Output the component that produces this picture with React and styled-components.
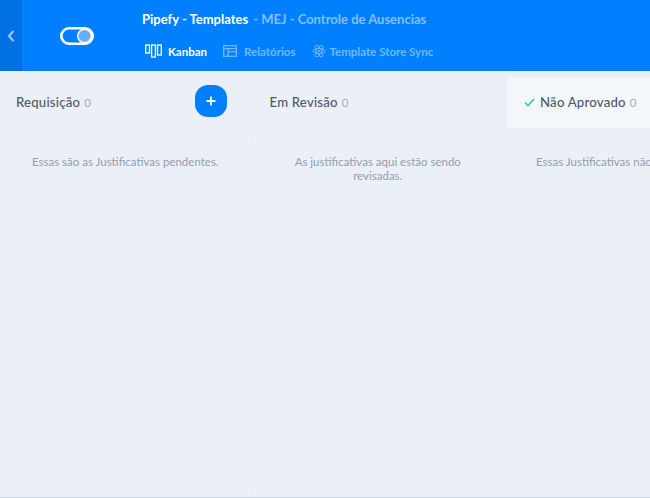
import React from "react";
import styled, { createGlobalStyle } from "styled-components";

const Global = createGlobalStyle`
  html, body { margin: 0; padding: 0; background: #ebf0f8; }
  body { font-family: Lato, "Noto Sans", sans-serif; overflow: hidden; }
  * { box-sizing: border-box; }
`;
const Page = styled.div`
  width: 650px; height: 498px; display: flex; flex-direction: column; overflow: hidden;
  border-bottom: 1px solid #cdd5e3; background: #ebf0f8;
`;
const Header = styled.header`
  height: 71px; flex: none; display: flex; background: #0080ff; color: #fff;
`;
const Back = styled.div`
  width: 22px; display: flex; align-items: center; justify-content: center; background: #0071e5;
`;
const LogoSlot = styled.div`
  width: 120px; display: flex; align-items: center; justify-content: center; padding: 0 11px 0 0;
`;
const Info = styled.div`
  display: flex; flex-direction: column; padding-top: 11px;
`;
const Title = styled.div`
  display: flex; gap: 5px; font-size: 13px; line-height: 17px; font-weight: 700; white-space: nowrap;
`;
const Faded = styled.span`color: #80c0ff;`;
const Tabs = styled.nav`
  display: flex; margin-top: 14px; padding-left: 3px; gap: 16px;
`;
const Tab = styled.div`
  display: flex; align-items: center; gap: ${p => p.$gap || 6}px; height: 18px; font-size: 11.5px; font-weight: 700;
  white-space: nowrap; color: ${p => (p.$active ? "#fff" : "#70b8ff")};
`;
const Board = styled.main`
  flex: 1; display: flex; min-height: 0;
`;
const Column = styled.section`
  width: 252.5px; flex: none; display: flex; flex-direction: column;
`;
const ColHead = styled.div`
  height: 50px; margin: 7px ${p => (p.$active ? "-20px" : "0")} 0 ${p => (p.$active ? "2px" : "0")};
  padding: 0 26px 2px ${p => p.$pad || 16}px;
  display: flex; align-items: center; gap: 4px; border-radius: 3px 0 0 3px;
  background: ${p => (p.$active ? "#f3f6fb" : "transparent")};
`;
const Check = styled.svg`margin-right: 1px; flex: none;`;
const ColName = styled.span`
  font-size: 13.2px; font-weight: 500; color: #4f5b66; letter-spacing: .2px; white-space: nowrap;
`;
const Count = styled.span`
  font-size: 11.5px; color: #a3adb9; white-space: nowrap;
`;
const Add = styled.button`
  width: 32px; height: 32px; margin: -2px 0 0 auto; padding: 0; border: 0; border-radius: 13px;
  background: #0080ff; display: flex; align-items: center; justify-content: center;
`;
const Body = styled.div`
  flex: 1; margin: 11px 0 3px; border-right: 1px solid #e7ecf4;
  padding: 16px 31px 0 ${p => (p.$clip ? 31 : 30)}px; text-align: center; font-size: 11.5px; line-height: 14px; color: #949daa;
  white-space: ${p => (p.$clip ? "nowrap" : "normal")};
`;

const Chevron = () => (
  <svg width="8" height="12" viewBox="0 0 8 12" fill="none" stroke="#9ccdff" strokeWidth="2" strokeLinecap="round" strokeLinejoin="round">
    <path d="M6 1.5 2 6l4 4.5" />
  </svg>
);
const Logo = () => (
  <svg width="34" height="18" viewBox="0 0 34 18" fill="none">
    <rect x="1.3" y="1.3" width="31.4" height="15.4" rx="7.7" stroke="#fff" strokeWidth="2.6" />
    <circle cx="24.5" cy="9" r="6.8" fill="#66b0ff" stroke="#fff" strokeWidth="1.4" />
  </svg>
);
const KanbanIcon = () => (
  <svg width="17" height="14" viewBox="0 0 17 14" fill="none" stroke="#fff" strokeWidth="1.3">
    <rect x=".7" y="1" width="3.8" height="8" />
    <rect x="6.6" y="1" width="3.8" height="12" />
    <rect x="12.5" y="1" width="3.8" height="10" />
  </svg>
);
const ReportIcon = () => (
  <svg width="14" height="12" viewBox="0 0 14 12" fill="none" stroke="#70b8ff" strokeWidth="1.3">
    <rect x=".7" y=".7" width="12.6" height="10.6" />
    <path d="M.7 3.6h12.6M5 3.6v7.7M5 6.6h8.3" />
  </svg>
);
const AtomIcon = () => (
  <svg width="14" height="14" viewBox="0 0 14 14" fill="none" stroke="#70b8ff" strokeWidth=".9">
    <ellipse cx="7" cy="7" rx="6.3" ry="2.5" />
    <ellipse cx="7" cy="7" rx="6.3" ry="2.5" transform="rotate(60 7 7)" />
    <ellipse cx="7" cy="7" rx="6.3" ry="2.5" transform="rotate(120 7 7)" />
    <circle cx="7" cy="7" r="1.1" fill="#70b8ff" stroke="none" />
  </svg>
);
const Plus = () => (
  <svg width="10" height="10" viewBox="0 0 10 10" stroke="#fff" strokeWidth="1.8" strokeLinecap="round">
    <path d="M5 1.2v7.6M1.2 5h7.6" />
  </svg>
);

export default function App() {
  return (
    <Page>
      <Global />
      <Header>
        <Back><Chevron /></Back>
        <LogoSlot><Logo /></LogoSlot>
        <Info>
          <Title>Pipefy - Templates <Faded>- MEJ - Controle de Ausencias</Faded></Title>
          <Tabs>
            <Tab $active><KanbanIcon />Kanban</Tab>
            <Tab $gap={7}><ReportIcon />Relatórios</Tab>
            <Tab $gap={4}><AtomIcon />Template Store Sync</Tab>
          </Tabs>
        </Info>
      </Header>
      <Board>
        <Column>
          <ColHead>
            <ColName>Requisição</ColName><Count>0</Count>
            <Add aria-label="Adicionar"><Plus /></Add>
          </ColHead>
          <Body>Essas são as Justificativas pendentes.</Body>
        </Column>
        <Column>
          <ColHead $pad={17}>
            <ColName>Em Revisão</ColName><Count>0</Count>
          </ColHead>
          <Body>As justificativas aqui estão sendo revisadas.</Body>
        </Column>
        <Column>
          <ColHead $active $pad={17}>
            <Check width="11" height="9" viewBox="0 0 11 9" fill="none" stroke="#35c98f" strokeWidth="1.6">
              <path d="M1 4.5 4 7.5 10 1" />
            </Check>
            <ColName>Não Aprovado</ColName><Count>0</Count>
          </ColHead>
          <Body $clip>Essas Justificativas não foram aprovadas.</Body>
        </Column>
      </Board>
    </Page>
  );
}
